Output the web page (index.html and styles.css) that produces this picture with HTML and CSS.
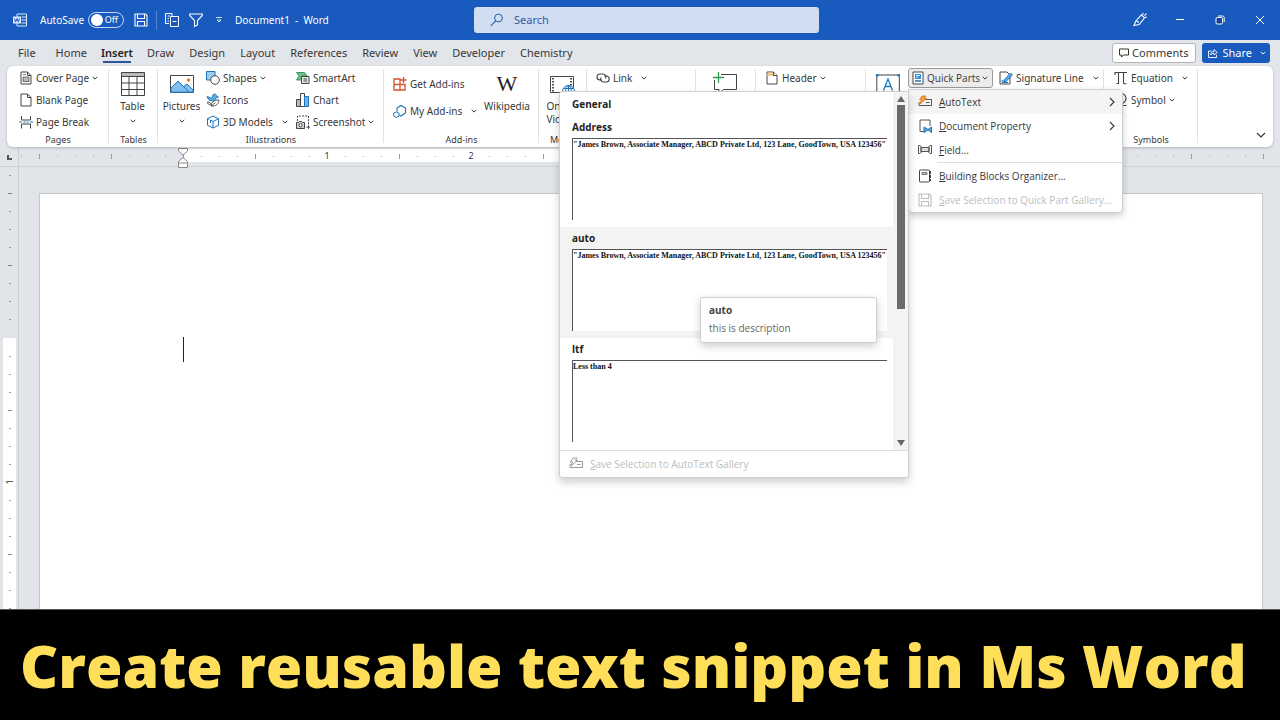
FILE: index.html
```html
<!DOCTYPE html>
<html lang="en">
<head>
<meta charset="utf-8">
<meta name="viewport" content="width=device-width, initial-scale=1">
<title>Document1 - Word</title>
<link rel="stylesheet" href="styles.css">
</head>
<body>
<svg class="defs" aria-hidden="true">
  <symbol id="chev" viewBox="0 0 6 6"><path d="M.7 1.800 3 4.100 5.300 1.800" fill="none" stroke="currentColor" stroke-width="1"/></symbol>
  <symbol id="next" viewBox="0 0 6 10"><path d="M1 1l4 4-4 4" fill="none" stroke="currentColor" stroke-width="1.100"/></symbol>
  <symbol id="disk" viewBox="0 0 14 14"><path d="M1 1h10.500L13 2.500V13H1zM3.500 1v4.500h7V1M3.500 13V8.500h7V13" fill="none" stroke="currentColor" stroke-width="1.100"/></symbol>
</svg>
<div class="app">
  <header class="titlebar">
    <div class="quick">
      <svg class="i14" viewBox="0 0 14 14"><path d="M4 4V1h9.500v12H4v-3M8.500 4h5M8.500 7h5M8.500 10h5" fill="none" stroke="#dbe8ff"/><rect y="3.500" width="8" height="7" fill="#dbe8ff"/><path d="M1.500 5.500l1.100 3.500L4 5.500 5.400 9l1.100-3.500" fill="none" stroke="#185abd" stroke-width="1"/></svg>
      <label class="autosave" for="autosave">AutoSave</label>
      <span class="switch"><input type="checkbox" id="autosave"><span class="knob"></span><span class="off">Off</span></span>
      <button class="tb" aria-label="Save"><svg class="i14"><use href="#disk"/></svg></button>
      <span class="tsep"></span>
      <button class="tb" aria-label="Compare"><svg class="i14" viewBox="0 0 14 14"><path d="M4 10.500H.5V.5h6.500V3M2.500 3h2.500M2.500 5.500h1.500M2.500 8h1.500M5.500 3.500h8v10h-8zM7.500 8.500h4" fill="none" stroke="#fff"/></svg></button>
      <button class="tb filter" aria-label="Filter"><svg class="i14" viewBox="0 0 14 14"><path d="M.7 1h12.600v1.500L8.500 7.500v4.500l-3 1.300V7.500L.7 2.500z" fill="none" stroke="#fff" stroke-width="1.100"/></svg></button>
      <button class="tb more" aria-label="Customize toolbar"><svg class="i6" viewBox="0 0 6 6"><path d="M0 .5h6M1 3l2 2 2-2z" fill="none" stroke="#fff" stroke-width=".8"/></svg></button>
      <span class="docname">Document1&nbsp; -&nbsp; Word</span>
    </div>
    <div class="search">
      <svg class="i14" viewBox="0 0 14 14"><circle cx="8.500" cy="5" r="3.900" fill="none" stroke="#2a5caa"/><path d="M5.700 7.800.8 12.800" stroke="#2a5caa" stroke-width="1.100"/></svg>
      <input type="search" placeholder="Search" aria-label="Search">
    </div>
    <div class="winctl">
      <button aria-label="Ink"><svg class="i16" viewBox="0 0 16 16"><path d="M2 13.500 3.800 9 9.500 2.800l3 3-5.300 6.700zM2 13.500l5.200-1M4.500 9.500c1.500-.5 2 .3 1.700 1.500M10.500 2.500 11.500 1M12.500 3.500l2-1.800M13 5.500l1.800-.5" fill="none" stroke="#fff" stroke-width="1.100"/></svg></button>
      <button aria-label="Minimize"><svg class="i10" viewBox="0 0 10 10"><path d="M1 4.500h8" stroke="#fff"/></svg></button>
      <button aria-label="Restore"><svg class="i10" viewBox="0 0 10 10"><rect x="1" y="2.500" width="6.500" height="6.500" rx="1.200" fill="#12439a" stroke="#fff"/><path d="M3 1h4.500C8.500 1 9.200 1.700 9.200 2.700V7" fill="none" stroke="#fff"/></svg></button>
      <button aria-label="Close"><svg class="i10" viewBox="0 0 10 10"><path d="M1 1l8 8M9 1 1 9" stroke="#fff"/></svg></button>
    </div>
  </header>

  <nav class="tabs">
    <button class="file">File</button><button>Home</button><button class="on">Insert</button><button>Draw</button><button>Design</button><button>Layout</button><button>References</button><button>Review</button><button>View</button><button>Developer</button><button>Chemistry</button>
    <button class="comments"><svg class="i10" viewBox="0 0 10 10"><path d="M.5 1h9v6H4.500L2.500 9V7h-2z" fill="none" stroke="#333"/></svg>Comments</button>
    <button class="share"><svg class="i10" viewBox="0 0 10 10"><path d="M3.500 3H.5v6.500h8V7M2.500 7c.3-2.500 1.500-3.500 3.500-3.500V1.500L9.300 4.500 6 7V5.300C4.500 5.300 3.300 5.800 2.500 7z" fill="none" stroke="#fff" stroke-width=".9"/></svg>Share<svg class="i6"><use href="#chev"/></svg></button>
  </nav>

  <section class="ribbon" aria-label="Insert">
    <div class="group g-pages">
      <div class="col">
        <button><svg class="i14" viewBox="0 0 14 14"><path d="M2 1h6.500L12 4.500V13H2zM8.500 1v3.500H12" fill="#fff" stroke="#444"/><path d="M4 6h6v4.500H4zM4 3.500h3" fill="#bbb" stroke="#555" stroke-width=".8"/></svg>Cover Page<svg class="i6"><use href="#chev"/></svg></button>
        <button><svg class="i14" viewBox="0 0 14 14"><path d="M2 1h6.500L12 4.500V13H2zM8.500 1v3.500H12" fill="#fff" stroke="#444"/></svg>Blank Page</button>
        <button><svg class="i14" viewBox="0 0 14 14"><path d="M2.500 1v4h9V1M2.500 13.500V9h9v4.500" fill="none" stroke="#444"/><path d="M0 7h3M4.500 7h2M7.500 7h2M11 7h3" stroke="#1e7bc0" stroke-width="1.100"/></svg>Page Break</button>
      </div>
      <h2>Pages</h2>
    </div>
    <div class="group g-tables">
      <button class="big"><svg class="i24" viewBox="0 0 24 24"><path d="M.5.5h23v4H.5z" fill="#b8b8b8"/><path d="M.5.5h23v23H.5zM.5 4.500h23M.5 11h23M.5 17.500h23M8 4.500v19M16 4.500v19" fill="none" stroke="#444"/></svg>Table<svg class="i6"><use href="#chev"/></svg></button>
      <h2>Tables</h2>
    </div>
    <div class="group g-illus">
      <div class="cols">
        <button class="big pics"><svg class="i24" viewBox="0 0 24 24"><path d="M.5 3.500h23v17H.5z" fill="#fff" stroke="#444"/><path d="M1 20.200V16l7-7 5.500 5.500L17 12l6.200 6v2.200z" fill="#7fbef0" stroke="#1e73b8"/><path d="M8 9l11 11" stroke="#1e73b8"/><circle cx="18.500" cy="8" r="1.800" fill="#e8812a"/></svg>Pictures<svg class="i6"><use href="#chev"/></svg></button>
        <div class="col shapes">
          <button><svg class="i14" viewBox="0 0 14 14"><path d="M.5.500h8.500v8.500H.5z" fill="#9ccbf0" stroke="#1e73b8"/><circle cx="9" cy="9" r="4.300" fill="#fff" stroke="#444"/></svg>Shapes<svg class="i6"><use href="#chev"/></svg></button>
          <button><svg class="i14" viewBox="0 0 14 14"><path d="M1 3.500 3 4c1 .8 2 1 3.500.5C6 2.500 7 1 8.500 1s2 1 2 2L12.500 4 10 5c0 2-1.500 3-4 3S1.500 6 1 3.500z" fill="#5aa9e6" stroke="#1e73b8" stroke-width=".8"/><path d="M5.500 13c-.5-4 2.500-6 7.500-6-.3 4-3 6.500-7.500 6zM5.500 13l4-3.500M5 12C3 12 1.500 11 1.500 9c2 0 3.300.8 3.500 3z" fill="#fff" stroke="#444" stroke-width=".9"/></svg>Icons</button>
          <button><svg class="i14" viewBox="0 0 14 14"><path d="M7 1l5.500 2.700v6.600L7 13l-5.500-2.700V3.700zM4.500 5 7 6.500 12.500 3.700M7 6.500V13M4.500 5v3M1.500 3.700 3 4.500" fill="#fff" stroke="#1e73b8"/></svg>3D Models<svg class="i6 far"><use href="#chev"/></svg></button>
        </div>
        <div class="col art">
          <button><svg class="i14" viewBox="0 0 14 14"><path d="M.5 1.500h8L11 5H5.500v4h-5L3 5z" fill="#6fc08b" stroke="#2f8f50" stroke-width=".9"/><path d="M5.500 5.500H13v7H5.500zM7.500 8h3.500M7.500 10h3.500" fill="#e6e6e6" stroke="#444"/></svg>SmartArt</button>
          <button><svg class="i14" viewBox="0 0 14 14"><path d="M.5 6.500h4v7h-4z" fill="#b8b8b8" stroke="#444"/><path d="M4.500.5h4v13h-4z" fill="#fff" stroke="#444"/><path d="M8.500 3.500h4v10h-4z" fill="#6db3ee" stroke="#1e73b8"/></svg>Chart</button>
          <button><svg class="i14" viewBox="0 0 14 14"><path d="M1.500 6V1h11v11H10" fill="none" stroke="#444" stroke-dasharray="2 1.200"/><path d="M.5 7.500h2l.7-1h2.600l.7 1h2v6h-8z" fill="#d0d0d0" stroke="#444"/><circle cx="4.500" cy="10.300" r="1.600" fill="#fff" stroke="#444"/><path d="M12.500 10.500v3.500M11 12.200h3" stroke="#444" stroke-width=".9"/></svg>Screenshot<svg class="i6"><use href="#chev"/></svg></button>
        </div>
      </div>
      <h2>Illustrations</h2>
    </div>
    <div class="group g-addins">
      <div class="cols">
        <div class="col two">
          <button><svg class="i14" viewBox="0 0 14 14"><path d="M7 7V2H1v11h11V7.500H1M7 7v6M10.500 0v6M7.500 3h6" fill="none" stroke="#d35230" stroke-width="1.300"/></svg>Get Add-ins</button>
          <button><svg class="i14" viewBox="0 0 14 14"><path d="M4 7.500V4l4-2.500 4.500 2.500v5l-4.500 3-1.500-.8" fill="none" stroke="#1e73b8" stroke-width="1.100"/><path d="M3.300 7.800 6 9.300v2.800l-2.700 1.400L.7 12V9.300z" fill="#fff" stroke="#1e73b8"/></svg>My Add-ins<svg class="i6 far"><use href="#chev"/></svg></button>
        </div>
        <button class="big wiki"><span class="w">W</span>Wikipedia</button>
      </div>
      <h2>Add-ins</h2>
    </div>
    <div class="group g-media">
      <button class="big"><svg class="i24" viewBox="0 0 24 24"><path d="M.5 4.500h23v16H.5z" fill="#fff" stroke="#444"/><path d="M3 6v14M21 6v9" stroke="#222" stroke-width="1.600" stroke-dasharray="1.500 1.500"/><circle cx="18.500" cy="19.500" r="6" fill="#fff" stroke="#1e73b8"/><path d="M12.500 19.500h12M18.500 13.500v10M14 16.500h9" stroke="#1e73b8"/><ellipse cx="18.500" cy="19.500" rx="2.800" ry="6" fill="none" stroke="#1e73b8"/></svg><span>Online<br>Videos</span></button>
      <h2>Media</h2>
    </div>
    <div class="group g-links">
      <div class="col">
        <button><svg class="i14" viewBox="0 0 14 14"><path d="M6 9H4a3 3 0 0 1 0-6h3a3 3 0 0 1 2.500 4.500M8 5h2.200a3 3 0 0 1 0 6H7.300A3 3 0 0 1 5 6.500" fill="none" stroke="#444" stroke-width="1.100"/></svg>Link<svg class="i6 far"><use href="#chev"/></svg></button>
      </div>
    </div>
    <div class="group g-comment">
      <button class="big" aria-label="Comment"><svg class="i24" viewBox="0 0 24 24"><path d="M8 2.500h15.500v15h-13L6 21.500v-4H1.500V8" fill="#fff" stroke="#444"/><path d="M5.500 0v11M0 5.500h11" stroke="#2f9e4f" stroke-width="1.300"/></svg></button>
    </div>
    <div class="group g-header">
      <div class="col">
        <button><svg class="i14" viewBox="0 0 14 14"><path d="M2 1h6.500L12 4.500V13H2z" fill="#fff" stroke="#444"/><path d="M2.500 1.500h6L9 5H2.500z" fill="#f0c890"/><path d="M8.500 1v3.500H12" fill="#fff" stroke="#444"/></svg>Header<svg class="i6"><use href="#chev"/></svg></button>
      </div>
    </div>
    <div class="group g-text">
      <div class="cols">
        <button class="big" aria-label="Text Box"><svg class="i24" viewBox="0 0 24 24"><path d="M.8 3h22.500v20H.8z" fill="#fff" stroke="#444"/><path d="M7.500 18.500 12 7l4.500 11.500M9 14.500h6" fill="none" stroke="#1e7bc0" stroke-width="1.300"/><path d="M0 2h2.500v2.500H0zM21.500 2H24v2.500h-2.500z" fill="#1e7bc0"/></svg></button>
        <div class="quickparts">
          <button class="qp" aria-expanded="true"><svg class="i14" viewBox="0 0 14 14"><path d="M2 1h10v12H2z" fill="#fff" stroke="#444"/><path d="M4 3h6v5H4z" fill="#2f8ad8"/><path d="M5 4.500h4M5 6.200h2" stroke="#fff" stroke-width=".9"/><path d="M4 10h6" stroke="#1e73b8" stroke-width="1.500"/></svg>Quick Parts<svg class="i6"><use href="#chev"/></svg></button>
          <div class="menu" role="menu">
            <button class="mi hot" role="menuitem"><svg class="i14" viewBox="0 0 14 14"><path d="M7.500 4.500h6v6H1V7M8 7.500h3.500" fill="none" stroke="#555"/><path d="M4 1h4L6.500 3.500h2L2 9l1.500-4H1.500z" fill="#f2a13b" stroke="#d87510" stroke-width=".8"/></svg><span><u>A</u>utoText</span><svg class="nx"><use href="#next"/></svg></button>
            <button class="mi" role="menuitem"><svg class="i14" viewBox="0 0 14 14"><path d="M6 12.500H2V1h10v6" fill="#fff" stroke="#555"/><path d="M6 8v5.500L10 11l3.500 2.500V8L10 10.500z" fill="#5aa9e6" stroke="#1e73b8"/></svg><span><u>D</u>ocument Property</span><svg class="nx"><use href="#next"/></svg></button>
            <button class="mi" role="menuitem"><svg class="i14" viewBox="0 0 14 14"><path d="M2.500 2.500H.5v8h2M11.500 2.500h2v8h-2" fill="none" stroke="#555"/><path d="M3 4.500h8v4H3z" fill="#ddd" stroke="#555"/><path d="M3 3v7M11 3v7" stroke="#555"/></svg><span><u>F</u>ield...</span></button>
            <hr>
            <button class="mi" role="menuitem"><svg class="i14" viewBox="0 0 14 14"><rect x="1.500" y="1" width="10" height="12" rx="1" fill="#fff" stroke="#444"/><path d="M4 3.500h5v2H4z" fill="#ccc" stroke="#555" stroke-width=".8"/><path d="M12.500 2v10" stroke="#444" stroke-dasharray="3 1"/></svg><span><u>B</u>uilding Blocks Organizer...</span></button>
            <button class="mi" role="menuitem" disabled><svg class="i14"><use href="#disk"/></svg><span><u>S</u>ave Selection to Quick Part Gallery...</span></button>

            <div class="gallery">
              <div class="scroller">
                <div class="entries">
                  <h3>General</h3>
                  <button class="entry"><strong>Address</strong><span class="preview">"James Brown, Associate Manager, ABCD Private Ltd, 123 Lane, GoodTown, USA 123456"</span></button>
                  <button class="entry hot"><strong>auto</strong><span class="preview">"James Brown, Associate Manager, ABCD Private Ltd, 123 Lane, GoodTown, USA 123456"</span></button>
                  <button class="entry"><strong>ltf</strong><span class="preview">Less than 4</span></button>
                </div>
                <div class="bar"><i class="up"></i><i class="thumb"></i><i class="down"></i></div>
              </div>
              <button class="savegal" disabled><svg class="i14" viewBox="0 0 14 14"><path d="M7.500 4.500h6v6H1V7M8 7.500h3.500M4 1h4L6.500 3.500h2L2 9l1.500-4H1.500z" fill="none" stroke="#999"/></svg><span><u>S</u>ave Selection to AutoText Gallery</span></button>
              <div class="tip" role="tooltip"><strong>auto</strong><span>this is description</span></div>
            </div>
          </div>
        </div>
        <div class="col"><button><svg class="i14" viewBox="0 0 14 14"><path d="M1 1h7l3 3v9H1z" fill="#fff" stroke="#444"/><path d="M2.500 10.500c1-2 1.500-2 1.800 0M5.500 8.500 11.500 2l2 2-6.300 6.300-2.200.7z" fill="#5aa9e6" stroke="#1e73b8" stroke-width=".9"/><path d="M3 11.500h6" stroke="#1e73b8"/></svg>Signature Line<svg class="i6 far"><use href="#chev"/></svg></button></div>
      </div>
    </div>
    <div class="group g-symbols">
      <div class="col">
        <button><svg class="i14" viewBox="0 0 14 14"><path d="M1 4V1.500h12M4.500 1.500v11H2.500M9.500 1.500v10.300c0 .7.500 1 1.500 1h1.500" fill="none" stroke="#444" stroke-width="1.100"/></svg>Equation<svg class="i6 far"><use href="#chev"/></svg></button>
        <button><svg class="i14" viewBox="0 0 14 14"><path d="M1 12.500h4v-2C2.500 9 1.500 7.500 1.500 5.500a5 5 0 0 1 10.500 0c0 2-1 3.500-3.500 5v2h4" fill="none" stroke="#444" stroke-width="1.100"/></svg>Symbol<svg class="i6"><use href="#chev"/></svg></button>
      </div>
      <h2>Symbols</h2>
    </div>
    <button class="collapse" aria-label="Collapse ribbon"><svg class="i10" viewBox="0 0 10 10"><path d="M1 3l4 4 4-4" fill="none" stroke="#333" stroke-width="1.100"/></svg></button>
  </section>

  <main class="workspace">
    <div class="corner"><i></i></div>
    <div class="hruler"><span class="margin-l"></span><span class="body-h"><b>1</b><b>2</b><b>3</b><b>4</b><b>5</b><b>6</b></span><span class="margin-r"></span>
      <svg class="indent" viewBox="0 0 10 20"><path d="M.5.5h9V3L5 7 .5 3z" fill="#fff" stroke="#888"/><path d="M.5 19.500v-6L5 9.500l4.500 4v6zM.5 15h9" fill="#fff" stroke="#888"/></svg>
    </div>
    <div class="vruler"><span class="margin-t"></span><span class="body-v"><b>1</b></span></div>
    <div class="canvas"><article class="page"><span class="caret"></span></article></div>
  </main>
</div>
<footer class="banner">Create reusable text snippet in Ms Word</footer>
</body>
</html>
```
FILE: styles.css
```css
*{box-sizing:border-box}
body{margin:0;min-height:100vh;display:flex;flex-direction:column;background:#000;color:#383838;font:10px/14px "Noto Sans",sans-serif;overflow-x:hidden}
button{font:inherit;color:inherit;background:none;border:0;padding:0;margin:0;display:flex;align-items:center;white-space:nowrap;text-align:left}
svg{display:block;flex:none;overflow:visible}
.defs{position:absolute;width:0;height:0}
.i6{width:6px;height:6px}.i10{width:10px;height:10px}.i14{width:14px;height:14px}.i16{width:16px;height:16px}.i24{width:24px;height:24px}
.app{flex:1;display:flex;flex-direction:column;background:#e2e5e9}

.titlebar{display:grid;grid-template-columns:474fr 345fr 461fr;align-items:center;height:40px;background:#185abd;color:#fff}
.quick{display:flex;align-items:center;padding-left:13px;white-space:nowrap}
.autosave{margin-left:13px}
.switch{position:relative;display:flex;align-items:center;justify-content:flex-end;width:36px;height:16px;margin:0 10px 0 4px;padding-right:5px;border:1px solid #c5d7f5;border-radius:8px;font-size:9px}
.switch input{position:absolute;inset:0;margin:0;opacity:0}
.knob{width:12px;height:12px;margin-right:auto;margin-left:2px;border-radius:50%;background:#fff}
.tsep{width:1px;height:19px;margin:0 8px;background:#5584d0}
.filter{margin-left:10px}
.more{margin:0 13px 0 13px}
.search{display:flex;align-items:center;height:26px;padding:0 16px;gap:10px;border-radius:3px;background:#d1ddf1}
.search input{flex:1;min-width:0;border:0;padding:0;background:none;outline:0;font:11px/16px "Noto Sans",sans-serif;color:#2a5caa}
.search input::placeholder{color:#2f5ca8;opacity:1}
.winctl{display:flex;justify-content:flex-end}
.winctl button{width:40px;height:40px;justify-content:center}

.tabs{display:flex;align-items:center;height:26px;padding:0 10px 0 11px;gap:1px;font-size:11px}
.tabs button{height:26px;padding:0 7px}
.tabs .file{margin-right:5px}
.tabs .on{padding:0 6px;font-weight:600;color:#222;background:linear-gradient(#2b579a,#2b579a) center 21px/28px 2px no-repeat}
.tabs .comments{height:20px;margin-left:auto;padding:0 7px 0 6px;gap:3px;border:1px solid #b5b5b5;border-radius:3px;background:#fff}
.tabs .share{height:20px;margin-left:5px;padding:0 4px 0 6px;gap:4px;border-radius:3px;background:#185abd;color:#fff}
.share .i6{margin-left:4px}

.ribbon{position:relative;z-index:2;display:flex;margin:0 7px;height:81px;padding-top:1px;border-radius:6px;background:#fff;box-shadow:0 1px 3px #0003}
.group{position:relative;flex:none;display:flex;flex-direction:column}
.group::after{content:"";position:absolute;right:0;top:2px;bottom:4px;width:1px;background:#e2e2e2}
.group h2{margin:auto 0 0;font-size:9px;line-height:15px;font-weight:400;text-align:center}
.cols{display:flex}
.col button{height:21px;gap:3px}
.col button+button{margin-top:1px}
.col button .far{margin-left:6px}
.col.two button{height:26px}
.big{flex-direction:column;line-height:13px;padding-right:2px}
.big .i6{margin-top:5px}
.big .i24{margin:5px 0 4px}
.g-pages{width:102px}.g-pages .col{padding-left:12px}
.g-tables{width:49px}
.g-illus{width:226px}
.pics{width:49px}
.shapes{width:90px;margin-left:-1px}
.g-addins{width:155px}.two{width:91px;padding:4px 0 0 9px}
.wiki{width:64px;padding:0}
.w{font:22px/24px "Liberation Serif",serif;margin:5px 0 4px;color:#222}
.g-media{width:48px}
.g-links{width:109px}.g-links .col{padding-left:9px}
.g-comment{width:60px}
.g-header{width:110px}.g-header .col{padding-left:9px}
.g-text{width:238px;z-index:3}.g-text .cols{padding-left:10px;gap:6px}
.g-text .big{padding:0}
.g-symbols{width:94px}.g-symbols .col{padding-left:10px}
.collapse{margin:auto 7px 7px auto}

.quickparts{position:relative;z-index:4;margin:1px 0 0 2px}
.qp{height:20px;padding:0 4px 0 2px;gap:2px;border:1px solid #9a9a9a;border-radius:3px;background:#ececec;font-family:"Open Sans",sans-serif}
.menu{position:absolute;left:0;top:21px;width:215px;border:1px solid #d0d0d0;border-radius:0 4px 4px 4px;background:#fff;box-shadow:0 3px 7px #0003;font-family:"Open Sans",sans-serif}
.mi{width:100%;height:24px;padding:0 7px 0 9px}
.mi span{flex:1;margin-left:7px}
.mi.hot{background:#f4f4f4}
.nx{width:6px;height:10px}
.mi:disabled,.savegal:disabled{color:#bdbdbd}
u{text-underline-offset:1px}
.menu hr{height:1px;margin:0 0 1px 28px;border:0;background:#ddd}

.gallery{position:absolute;right:100%;top:1px;width:350px;border:1px solid #cfcfcf;border-radius:3px;background:#fff;box-shadow:0 4px 8px #0003}
.scroller{display:flex;border-bottom:1px solid #ddd}
.entries{flex:1;min-width:0;padding-bottom:1px}
.gallery h3,.gallery strong{margin:0;font-size:10px;font-weight:700;color:#222}
.gallery h3{padding-left:12px;line-height:24px}
.entry{width:100%;height:111px;padding:0 6px 0 12px;flex-direction:column;align-items:stretch}
.entry strong{line-height:22px}
.entry.hot{background:#f3f3f3}
.preview{height:82px;padding:1px 0;border:solid #555;border-width:1px 0 0 1px;background:#fff;color:#111;font:bold 8px/10px "Liberation Serif",serif}
.bar{width:15px;display:flex;flex-direction:column;align-items:center;background:#f3f3f3}
.up,.down{border:4px solid transparent}
.up{border-bottom:6px solid #666;border-top:0;margin:4px 0 3px}
.down{border-top:6px solid #666;border-bottom:0;margin:auto 0 4px}
.thumb{width:8px;height:204px;background:#6b6b6b}
.savegal{height:26px;padding-left:9px}
.savegal span{margin-left:7px}
.tip{position:absolute;left:140px;top:205px;width:177px;height:46px;padding:3px 8px;display:flex;flex-direction:column;border:1px solid #d0d0d0;border-radius:3px;background:#fff;box-shadow:0 3px 8px #0003;color:#666}
.tip strong,.tip span{line-height:18px}
.gallery .tip strong{color:#444;line-height:18px}

.workspace{flex:1;display:grid;grid-template:20px 1fr/19px 1fr;background:#e1e5e9}
.corner{border-right:1px solid #ccd0d4;border-bottom:1px solid #ccd0d4}
.corner i{display:block;width:5px;height:5px;margin:8px 0 0 7px;border:solid #555;border-width:0 0 2px 2px}
.hruler{position:relative;display:flex;border-bottom:1px solid #d0d4d8;padding-bottom:4px}
.hruler>span{margin-top:2px}
.margin-l{width:164px}
.body-h{width:936px;background-color:#fff;display:flex}
.margin-r{flex:1}
.margin-l,.body-h,.margin-r{background-image:linear-gradient(90deg,#999 1px,transparent 1px),linear-gradient(90deg,#aaa 1px,transparent 1px);background-repeat:repeat-x;background-size:72px 5px,18px 1px;background-position:0 5px,0 7px}
.margin-l{background-position:20px 5px,2px 7px}
.body-h b,.body-v b{font-size:9px;font-weight:400;line-height:14px;background:#fff}
.body-h b{width:10px;margin-left:134px;text-align:center;transform:translateX(5px)}
.indent{position:absolute;left:159px;top:1px;width:10px;height:20px}
.vruler{display:flex;flex-direction:column;border-right:1px solid #ccd0d4}
.margin-t{height:171px}
.margin-t,.body-v{margin:0 2px 0 3px;background-image:linear-gradient(#888 1px,transparent 1px),linear-gradient(#999 1px,transparent 1px);background-repeat:repeat-y;background-size:4px 72px,2px 18px;background-position:5px 26px,6px 8px}
.body-v{flex:1;background-color:#fff;background-position:5px 71px,6px 17px;background-clip:padding-box;border-top:1px solid #fff}
.margin-t{background-size:4px 72px,2px 18px;border-bottom:1px solid #e1e5e9;background-clip:padding-box}
.body-v b{display:block;width:13px;height:10px;margin-top:138px;line-height:10px;text-align:center;transform:rotate(-90deg)}
.canvas{display:flex;padding:26px 17px 0 20px}
.page{flex:1;padding:143px 0 0 143px;border:1px solid #c4c8cc;border-bottom:0;background:#fff}
.caret{display:block;width:1px;height:25px;background:#222}

.banner{height:111px;padding-left:20px;border-top:1px solid #555;background:#000;color:#ffde59;font:800 59px/110px "Open Sans",sans-serif;white-space:nowrap}
```
